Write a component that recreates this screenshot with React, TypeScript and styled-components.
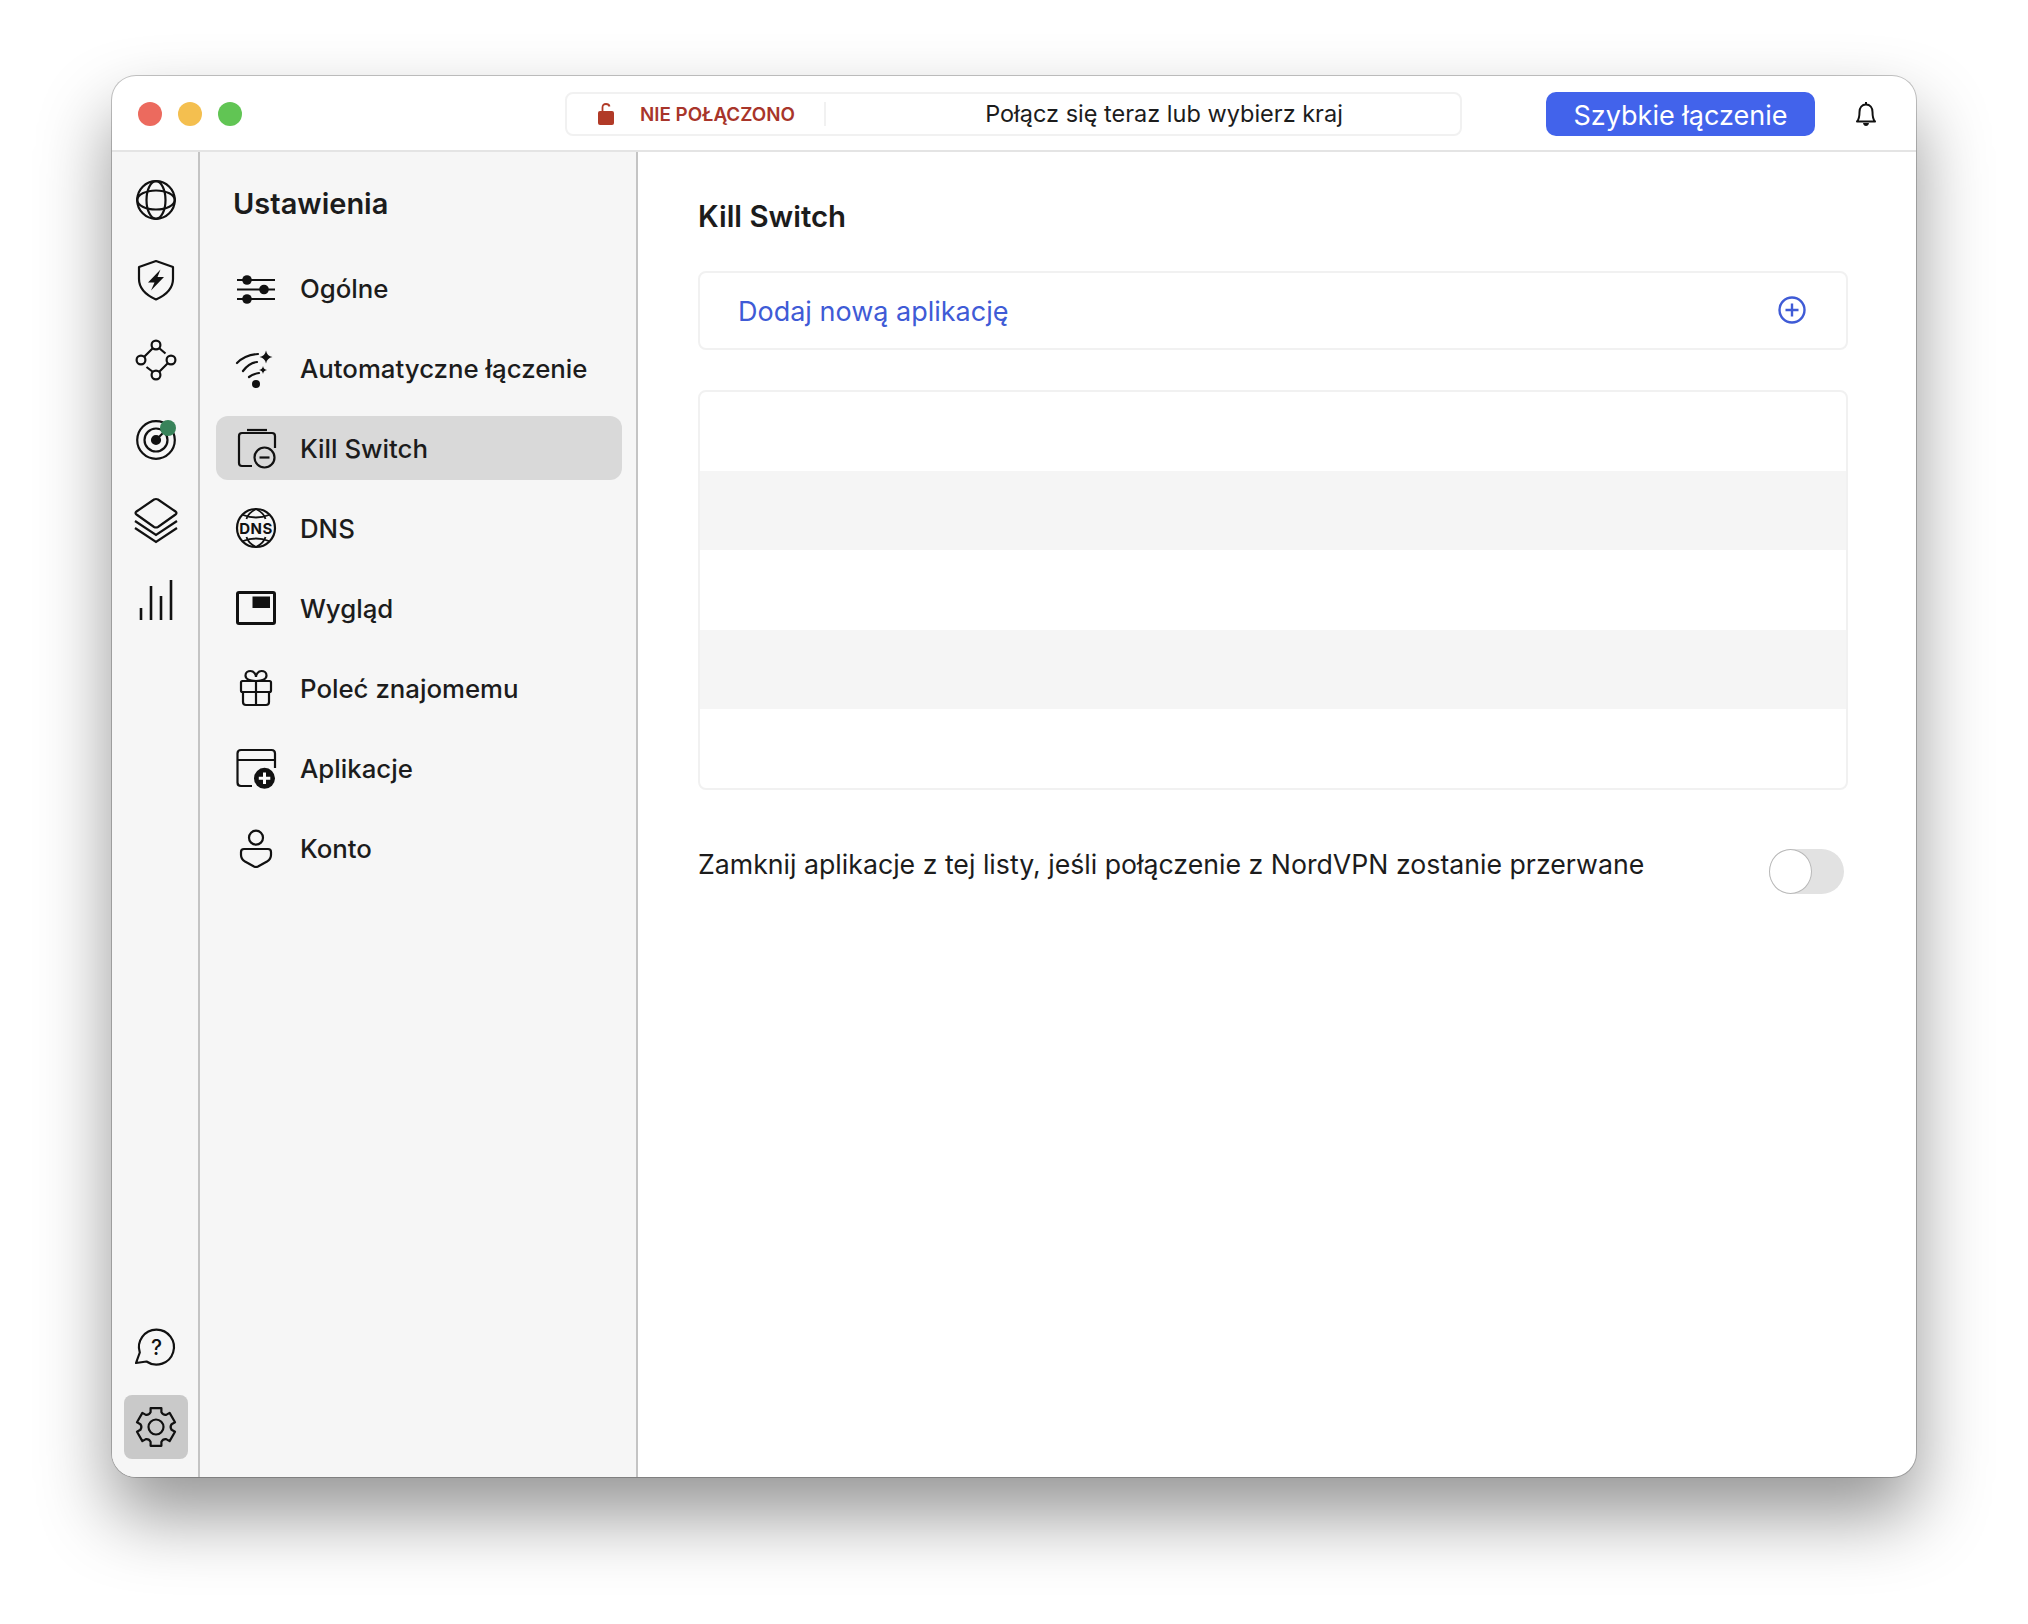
import React from "react";
import styled, { createGlobalStyle } from "styled-components";

const GlobalStyle = createGlobalStyle`
  html, body {
    margin: 0;
    padding: 0;
    background: #ffffff;
    font-family: Inter, "Liberation Sans", sans-serif;
  }
`;

const gearPath = () => {
  const at = (deg: number, r: number) => {
    const a = (deg * Math.PI) / 180;
    return `${(24 + r * Math.cos(a)).toFixed(2)} ${(24 + r * Math.sin(a)).toFixed(2)}`;
  };
  let d = "";
  for (let i = 0; i < 6; i++) {
    const a = -90 + i * 60;
    d += `${i === 0 ? "M" : "L"}${at(a - 20, 15.8)}L${at(a - 16, 19.6)}L${at(a + 16, 19.6)}L${at(a + 20, 15.8)}Q${at(a + 30, 13.6)} ${at(a + 40, 15.8)}`;
  }
  return d + "Z";
};

const GlobeIcon = () => (
  <Glyph viewBox="0 0 48 48">
    <circle cx="24" cy="24" r="18.8" />
    <ellipse cx="24" cy="24" rx="9.5" ry="18.8" />
    <ellipse cx="24" cy="24" rx="18.8" ry="9.5" />
  </Glyph>
);

const ShieldIcon = () => (
  <Glyph viewBox="0 0 48 48">
    <path d="M24 5L41 11V23C41 33 33 39.5 24 43.5C15 39.5 7 33 7 23V11Z" strokeLinejoin="round" />
    <path d="M28.500 13.500L16 26.500H22.500L19 34.500L32 21H25.500Z" fill="#111" stroke="none" />
  </Glyph>
);

const NodesIcon = () => (
  <Glyph viewBox="0 0 48 48">
    <circle cx="24" cy="9" r="4.400" />
    <circle cx="9" cy="24" r="4.400" />
    <circle cx="39" cy="24" r="4.400" />
    <circle cx="24" cy="39" r="4.400" />
    <path d="M12 21L21 12M27 12L33.500 17.500M36 27L27 36M14.500 31L21 36" />
  </Glyph>
);

const RadarIcon = () => (
  <Glyph viewBox="0 0 48 48">
    <circle cx="24" cy="24" r="18.800" />
    <circle cx="24" cy="24" r="11.500" />
    <circle cx="24" cy="24" r="4" fill="#111" />
    <path d="M24 24L31 17" />
    <circle cx="36" cy="12" r="8" fill="#38835a" stroke="none" />
  </Glyph>
);

const LayersIcon = () => (
  <Glyph viewBox="0 0 48 48">
    <path d="M22 3.500Q24 2.500 26 3.500L43.500 15.500Q45.500 17 43.500 18.500L26 31Q24 32 22 31L4.500 18.500Q2.500 17 4.500 15.500Z" />
    <path d="M3 25L24 39L45 25M3 32L24 46L45 32" />
  </Glyph>
);

const BarsIcon = () => (
  <Glyph viewBox="0 0 48 48">
    <path d="M9 44V32M19 44V10M29 44V20M39 44V4" strokeWidth="2.600" />
  </Glyph>
);

const HelpIcon = () => (
  <Glyph viewBox="0 0 48 48">
    <path d="M7.800 29.500A17.500 17.500 0 1 1 14.500 38.500L4 40Z" strokeLinejoin="round" />
    <GlyphLabel x="24.500" y="32" fontSize="21" fontWeight="500">?</GlyphLabel>
  </Glyph>
);

const GearIcon = () => (
  <Glyph viewBox="0 0 48 48">
    <path d={gearPath()} strokeLinejoin="round" />
    <circle cx="24" cy="24" r="7.500" />
  </Glyph>
);

const SlidersIcon = () => (
  <Glyph viewBox="0 0 48 48">
    <path d="M5 16H43M5 25.500H43M5 35H43" />
    <circle cx="15" cy="16" r="4.800" fill="#111" stroke="none" />
    <circle cx="32" cy="25.500" r="4.800" fill="#111" stroke="none" />
    <circle cx="15" cy="35" r="4.800" fill="#111" stroke="none" />
  </Glyph>
);

const WifiIcon = () => (
  <Glyph viewBox="0 0 48 48">
    <path d="M5 19Q13 11 26 10M11 27Q17 19 25 18M17 33Q21 30 27 29" strokeLinecap="round" />
    <circle cx="24" cy="40" r="4" fill="#111" stroke="none" />
    <path d="M34 6.500Q35 12 40.500 13Q35 14 34 19.500Q33 14 27.500 13Q33 12 34 6.500Z" fill="#111" stroke="none" />
    <path d="M31 22Q31.500 25.500 35 26Q31.500 26.500 31 30Q30.500 26.500 27 26Q30.500 25.500 31 22Z" fill="#111" stroke="none" />
  </Glyph>
);

const KillIcon = () => (
  <Glyph viewBox="0 0 48 48">
    <path d="M15 6H35" />
    <path d="M20 42H10Q7 42 7 39V12Q7 9 10 9H40Q43 9 43 12V24" />
    <circle cx="32.500" cy="33.500" r="10" />
    <path d="M27.500 33.500H37.500" />
  </Glyph>
);

const DnsIcon = () => (
  <Glyph viewBox="0 0 48 48">
    <circle cx="24" cy="24" r="19" />
    <path d="M11 11Q24 16 37 11M11 37Q24 32 37 37M24 5Q16 9 14.500 15M24 5Q32 9 33.500 15M24 43Q16 39 14.500 33M24 43Q32 39 33.500 33" strokeWidth="1.800" />
    <GlyphLabel x="24" y="29.500" fontSize="15" fontWeight="700" letterSpacing="0.500">DNS</GlyphLabel>
  </Glyph>
);

const ViewIcon = () => (
  <Glyph viewBox="0 0 48 48">
    <rect x="5.500" y="8.500" width="37" height="31" rx="1.500" strokeWidth="3" />
    <rect x="20.500" y="12.500" width="17.500" height="11.500" fill="#111" stroke="none" />
  </Glyph>
);

const GiftIcon = () => (
  <Glyph viewBox="0 0 48 48">
    <rect x="9" y="17" width="30" height="11" rx="1.500" />
    <path d="M11 28V38Q11 41 14 41H34Q37 41 37 38V28M24 17V41" />
    <path d="M24 17C19 17 13.500 15.500 13.500 11.500C13.500 8.500 16 7 18.500 7C22 7 24 10.500 24 13C24 10.500 26 7 29.500 7C32 7 34.500 8.500 34.500 11.500C34.500 15.500 29 17 24 17Z" />
  </Glyph>
);

const AppsIcon = () => (
  <Glyph viewBox="0 0 48 48">
    <path d="M20 42H9Q5.500 42 5.500 38.500V9.500Q5.500 6 9 6H39.500Q43 6 43 9.500V24M5.500 16H43" />
    <circle cx="32.500" cy="34.300" r="10.500" fill="#111" stroke="none" />
    <path d="M32.500 28.500V40M26.800 34.300H38.300" stroke="#fff" strokeWidth="3" />
  </Glyph>
);

const UserIcon = () => (
  <Glyph viewBox="0 0 48 48">
    <circle cx="24" cy="13.700" r="7" />
    <path d="M12 25H36Q39 25 39 28V31Q39 35 35 37.500L26 42.500Q24 43.500 22 42.500L13 37.500Q9 35 9 31V28Q9 25 12 25Z" strokeLinejoin="round" />
  </Glyph>
);

const railTop = [GlobeIcon, ShieldIcon, NodesIcon, RadarIcon, LayersIcon, BarsIcon];

const menu = [
  { label: "Ogólne", Icon: SlidersIcon },
  { label: "Automatyczne łączenie", Icon: WifiIcon },
  { label: "Kill Switch", Icon: KillIcon, active: true },
  { label: "DNS", Icon: DnsIcon },
  { label: "Wygląd", Icon: ViewIcon },
  { label: "Poleć znajomemu", Icon: GiftIcon },
  { label: "Aplikacje", Icon: AppsIcon },
  { label: "Konto", Icon: UserIcon },
];

const App = () => {
  return (
    <Page>
      <GlobalStyle />
      <Window>
        <TitleBar>
          <Lights>
            <Light $color="#ec6a5e" />
            <Light $color="#f4bf4f" />
            <Light $color="#61c554" />
          </Lights>
          <SearchBar>
            <Status>
              <svg width="16" height="24" viewBox="0 0 16 24">
                <path d="M4.500 10V5.500Q4.500 2 8 2Q11 2 11.500 4.500" fill="none" stroke="#b13a27" strokeWidth="1.800" />
                <rect y="9" width="16" height="14" rx="2" fill="#b13a27" />
              </svg>
              <StatusText>NIE POŁĄCZONO</StatusText>
            </Status>
            <SearchText>Połącz się teraz lub wybierz kraj</SearchText>
          </SearchBar>
          <QuickButton>Szybkie łączenie</QuickButton>
          <svg width="22" height="26" viewBox="0 0 22 26" fill="none" stroke="#111" strokeWidth="2">
            <path d="M2 20.500C4 18.500 4.500 16 4.500 11C4.500 6.500 7 3.500 11 3.500C15 3.500 17.500 6.500 17.500 11C17.500 16 18 18.500 20 20.500Z" strokeLinejoin="round" />
            <path d="M11 1V3.500" />
            <path d="M8 22H14Q13.500 25 11 25Q8.500 25 8 22Z" fill="#111" stroke="none" />
          </svg>
        </TitleBar>
        <Body>
          <Rail>
            <RailGroup>
              {railTop.map((Icon, index) => (
                <RailItem key={index}>
                  <Icon />
                </RailItem>
              ))}
            </RailGroup>
            <RailGroup>
              <RailItem>
                <HelpIcon />
              </RailItem>
              <RailItem $active>
                <GearIcon />
              </RailItem>
            </RailGroup>
          </Rail>
          <Sidebar>
            <SidebarTitle>Ustawienia</SidebarTitle>
            <Menu>
              {menu.map(({ label, Icon, active }) => (
                <MenuRow key={label} $active={active}>
                  <Icon />
                  {label}
                </MenuRow>
              ))}
            </Menu>
          </Sidebar>
          <Content>
            <Title>Kill Switch</Title>
            <AddCard>
              <AddLabel>Dodaj nową aplikację</AddLabel>
              <AddIcon width="30" height="30" viewBox="0 0 30 30">
                <circle cx="15" cy="15" r="12.500" />
                <path d="M15 8.500V21.500M8.500 15H21.500" />
              </AddIcon>
            </AddCard>
            <AppList>
              {[0, 1, 2, 3, 4].map((row) => (
                <AppRow key={row} />
              ))}
            </AppList>
            <ToggleRow>
              <ToggleLabel>Zamknij aplikacje z tej listy, jeśli połączenie z NordVPN zostanie przerwane</ToggleLabel>
              <Toggle>
                <Knob />
              </Toggle>
            </ToggleRow>
          </Content>
        </Body>
      </Window>
    </Page>
  );
};

const Page = styled.div`
  box-sizing: border-box;
  width: 2028px;
  height: 1624px;
  padding: 76px 112px 147px;
  overflow: hidden;
`;

const Window = styled.div`
  display: flex;
  flex-direction: column;
  height: 1401px;
  background: #ffffff;
  border-radius: 24px;
  overflow: hidden;
  box-shadow: 0 0 0 1px rgba(0, 0, 0, 0.22), 0 38px 72px rgba(0, 0, 0, 0.42);
`;

const TitleBar = styled.div`
  flex: 0 0 76px;
  box-sizing: border-box;
  display: flex;
  align-items: center;
  padding: 2px 0 0 26px;
  border-bottom: 2px solid #e4e4e4;
`;

const Lights = styled.div`
  display: flex;
  gap: 16px;
  margin-right: 323px;
`;

const Light = styled.span<{ $color: string }>`
  width: 24px;
  height: 24px;
  border-radius: 50%;
  background: ${(p) => p.$color};
`;

const SearchBar = styled.div`
  box-sizing: border-box;
  width: 897px;
  height: 44px;
  display: flex;
  align-items: center;
  border: 2px solid #f1f1f1;
  border-radius: 8px;
  margin-right: 84px;
`;

const Status = styled.div`
  box-sizing: border-box;
  width: 259px;
  height: 24px;
  display: flex;
  align-items: center;
  gap: 26px;
  padding-left: 31px;
  border-right: 2px solid #f1f1f1;
`;

const StatusText = styled.span`
  font-size: 18.800px;
  font-weight: 600;
  color: #a8352a;
  white-space: nowrap;
`;

const SearchText = styled.span`
  flex: 1;
  padding: 0 0 2px 42px;
  text-align: center;
  font-size: 23.500px;
  color: #1c1c1c;
`;

const QuickButton = styled.button`
  width: 269px;
  height: 44px;
  padding: 2px 0 0;
  border: none;
  border-radius: 10px;
  margin-right: 40px;
  background: #4263eb;
  color: #ffffff;
  font-family: inherit;
  font-size: 27px;
  font-weight: 400;
`;

const Body = styled.div`
  flex: 1;
  min-height: 0;
  display: flex;
`;

const Rail = styled.div`
  box-sizing: border-box;
  flex: 0 0 88px;
  display: flex;
  flex-direction: column;
  justify-content: space-between;
  padding: 16px 10px 18px 12px;
  background: #f6f6f6;
  border-right: 2px solid #c4c4c4;
`;

const RailGroup = styled.div`
  display: flex;
  flex-direction: column;
  gap: 16px;
`;

const RailItem = styled.div<{ $active?: boolean }>`
  width: 64px;
  height: 64px;
  display: flex;
  align-items: center;
  justify-content: center;
  border-radius: 8px;
  background: ${(p) => (p.$active ? "#c9c9c9" : "transparent")};
`;

const Glyph = styled.svg`
  flex: 0 0 48px;
  width: 48px;
  height: 48px;
  fill: none;
  stroke: #111111;
  stroke-width: 2.2px;
  overflow: visible;
`;

const GlyphLabel = styled.text`
  fill: #111111;
  stroke: none;
  text-anchor: middle;
  font-family: Inter, "Liberation Sans", sans-serif;
`;

const Sidebar = styled.div`
  box-sizing: border-box;
  flex: 0 0 438px;
  padding: 32px 14px 0 16px;
  background: #f6f6f6;
  border-right: 2px solid #c4c4c4;
`;

const SidebarTitle = styled.div`
  height: 40px;
  line-height: 40px;
  padding-left: 17px;
  margin-bottom: 32px;
  font-size: 29px;
  font-weight: 600;
  color: #1c1c1c;
`;

const Menu = styled.div`
  display: flex;
  flex-direction: column;
  gap: 16px;
`;

const MenuRow = styled.div<{ $active?: boolean }>`
  height: 64px;
  display: flex;
  align-items: center;
  gap: 20px;
  padding-left: 16px;
  border-radius: 12px;
  background: ${(p) => (p.$active ? "#d9d9d9" : "transparent")};
  font-size: 25.800px;
  font-weight: 500;
  color: #1c1c1c;
`;

const Content = styled.div`
  flex: 1;
  min-width: 0;
  box-sizing: border-box;
  padding: 45px 68px 0 60px;
`;

const Title = styled.div`
  height: 40px;
  line-height: 40px;
  margin-bottom: 34px;
  font-size: 29.400px;
  font-weight: 600;
  color: #1c1c1c;
`;

const AddCard = styled.div`
  box-sizing: border-box;
  height: 79px;
  display: flex;
  align-items: center;
  justify-content: space-between;
  padding: 0 39px 0 38px;
  margin-bottom: 40px;
  border: 2px solid #f1f1f1;
  border-radius: 8px;
`;

const AddLabel = styled.span`
  padding-top: 1px;
  font-size: 27px;
  color: #3f5bd6;
`;

const AddIcon = styled.svg`
  margin-bottom: 2px;
  fill: none;
  stroke: #3f5bd6;
  stroke-width: 2.4px;
`;

const AppList = styled.div`
  height: 400px;
  display: flex;
  flex-direction: column;
  border: 2px solid #f1f1f1;
  border-radius: 8px;
  overflow: hidden;
  box-sizing: border-box;
`;

const AppRow = styled.div`
  flex: 1;
  &:nth-child(even) {
    background: #f5f5f5;
  }
`;

const ToggleRow = styled.div`
  display: flex;
  align-items: center;
  justify-content: space-between;
  margin-top: 58px;
  padding-right: 4px;
`;

const ToggleLabel = styled.span`
  padding-bottom: 14px;
  font-size: 26.700px;
  color: #1c1c1c;
`;

const Toggle = styled.div`
  width: 75px;
  height: 45px;
  border-radius: 23px;
  background: #e2e2e2;
`;

const Knob = styled.div`
  box-sizing: border-box;
  width: 43px;
  height: 45px;
  border-radius: 50%;
  background: #ffffff;
  border: 1px solid #b8b8b8;
`;

export default App;
